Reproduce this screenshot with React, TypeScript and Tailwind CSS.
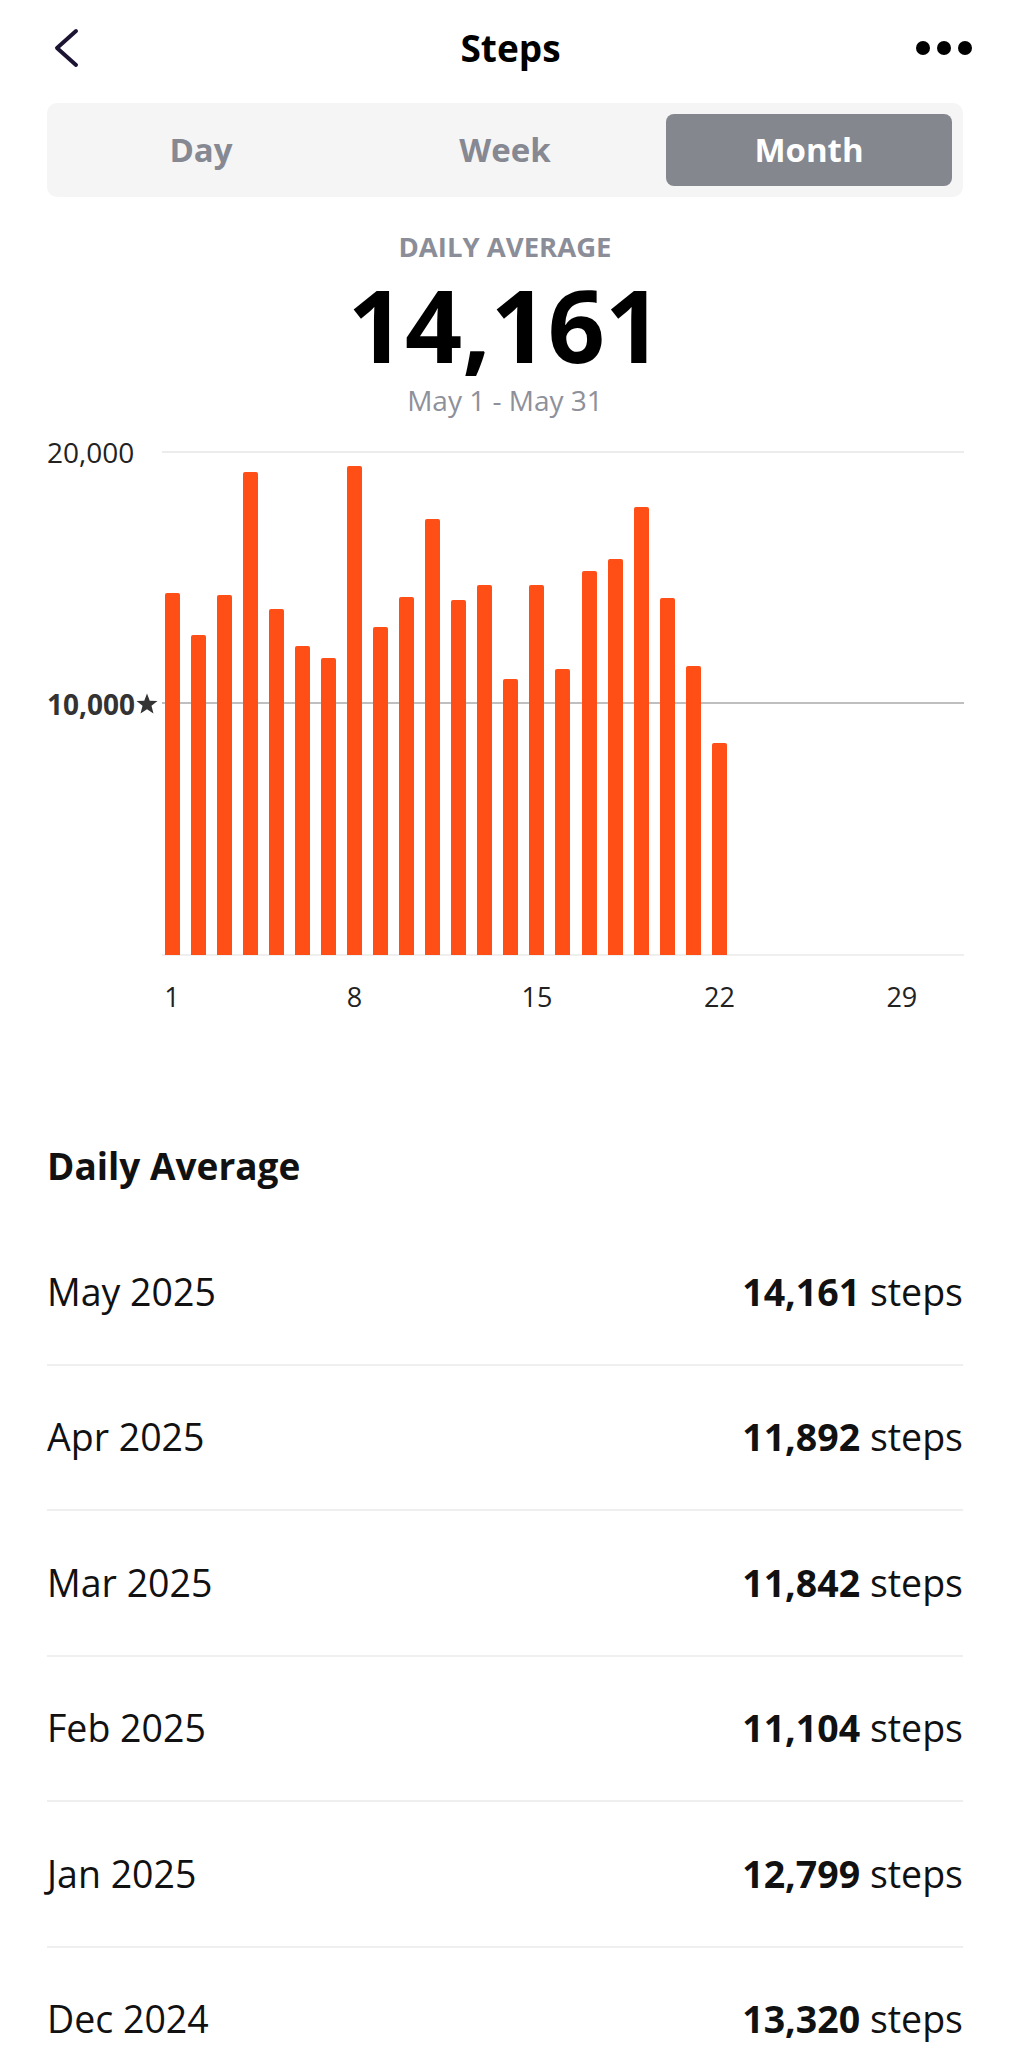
import { ReactNode } from "react";

const days = [
  14394, 12726, 14315, 19217, 13747, 12289, 11800, 19456, 13031, 14223, 17334,
  14132, 14728, 10993, 14728, 11375, 15268, 15761, 17827, 14184, 11482, 8435,
];

const months = [
  { label: "May 2025", value: "14,161" },
  { label: "Apr 2025", value: "11,892" },
  { label: "Mar 2025", value: "11,842" },
  { label: "Feb 2025", value: "11,104" },
  { label: "Jan 2025", value: "12,799" },
  { label: "Dec 2024", value: "13,320" },
];

const PLOT_H = 503;
const MAX = 20000;

function Segment({ children, active }: { children: ReactNode; active?: boolean }) {
  return (
    <div
      className={
        active
          ? "flex items-center justify-center rounded-[8px] bg-[#85878f] text-white"
          : "flex items-center justify-center text-[#868892]"
      }
    >
      {children}
    </div>
  );
}

function Star() {
  return (
    <svg width="22" height="21" viewBox="0 0 24 23" className="ml-[1px]">
      <polygon
        points="12,0.5 15,8.4 23.5,8.8 16.9,14.1 19.1,22.4 12,17.7 4.9,22.4 7.1,14.1 0.5,8.8 9,8.4"
        fill="#333"
      />
    </svg>
  );
}

export default function App() {
  return (
    <div className="w-[1010px] min-h-[2048px] bg-white font-['Open_Sans',sans-serif] text-[#111]">
      <header className="grid h-[96px] grid-cols-[1fr_auto_1fr] items-center pl-[53px] pr-[38px]">
        <svg width="28" height="40" viewBox="0 0 28 40">
          <polyline
            points="23,3 4,20 23,37"
            fill="none"
            stroke="#1d1433"
            strokeWidth="4"
            strokeLinecap="round"
            strokeLinejoin="round"
          />
        </svg>
        <h1 className="pr-[4px] text-[37px] font-bold leading-[48px] text-black">Steps</h1>
        <div className="flex justify-end gap-[7px]">
          <span className="h-[14px] w-[14px] rounded-full bg-black" />
          <span className="h-[14px] w-[14px] rounded-full bg-black" />
          <span className="h-[14px] w-[14px] rounded-full bg-black" />
        </div>
      </header>

      <div className="px-[47px]">
        <div className="mt-[7px] grid h-[94px] grid-cols-3 gap-[18px] rounded-[10px] bg-[#f5f5f6] p-[11px] text-[33px] font-bold">
          <Segment>Day</Segment>
          <Segment>Week</Segment>
          <Segment active>Month</Segment>
        </div>

        <div className="flex flex-col items-center">
          <p className="mt-[32px] text-[27.5px] font-bold leading-[36px] text-[#8b8d98]">DAILY AVERAGE</p>
          <p className="mt-[9px] text-[100px] font-bold leading-[100px] text-black">14,161</p>
          <p className="mt-[8px] text-[28px] leading-[36px] text-[#8e909a]">May 1 - May 31</p>
        </div>

        <div className="-mr-[4px] mt-[34px] flex">
          <div className="relative h-[503px] w-[112px]">
            <span className="absolute left-0 top-0 -translate-y-1/2 text-[28px] leading-[36px] text-[#222]">
              20,000
            </span>
            <span className="absolute left-0 top-1/2 flex -translate-y-1/2 items-center text-[28px] font-bold leading-[36px] text-[#333]">
              10,000
              <Star />
            </span>
          </div>
          <div className="flex-1">
            <div className="relative h-[503px]">
              <div className="absolute left-[3px] right-[3px] top-[-1px] h-[2px] bg-[#ececec]" />
              <div className="absolute left-[3px] right-[3px] top-[250px] h-[2px] bg-[#bfbfbf]" />
              <div className="absolute bottom-[-1px] left-[3px] right-[3px] h-[2px] bg-[#efefef]" />
              <div className="relative grid h-full grid-cols-[repeat(31,minmax(0,1fr))]">
                {Array.from({ length: 31 }).map((_, i) => (
                  <div key={i} className="flex items-end justify-center">
                    {days[i] !== undefined && (
                      <div
                        className="w-[15px] rounded-t-[2px] bg-[#ff4f17]"
                        style={{ height: (days[i] / MAX) * PLOT_H }}
                      />
                    )}
                  </div>
                ))}
              </div>
            </div>
            <div className="mt-[27px] grid grid-cols-[repeat(31,minmax(0,1fr))] text-[27px] leading-[30px] text-[#222]">
              {Array.from({ length: 31 }).map((_, i) => (
                <div key={i} className="flex justify-center">
                  {i % 7 === 0 ? i + 1 : ""}
                </div>
              ))}
            </div>
          </div>
        </div>

        <h2 className="mt-[130px] text-[37px] font-bold leading-[48px] text-[#111]">Daily Average</h2>

        <div className="mt-[30px]">
          {months.map((m) => (
            <div
              key={m.label}
              className="flex h-[145.5px] items-center justify-between border-b-2 border-[#efefef] text-[37.5px] leading-[48px]"
            >
              <span>{m.label}</span>
              <span>
                <span className="font-bold">{m.value}</span> steps
              </span>
            </div>
          ))}
        </div>
      </div>
    </div>
  );
}
